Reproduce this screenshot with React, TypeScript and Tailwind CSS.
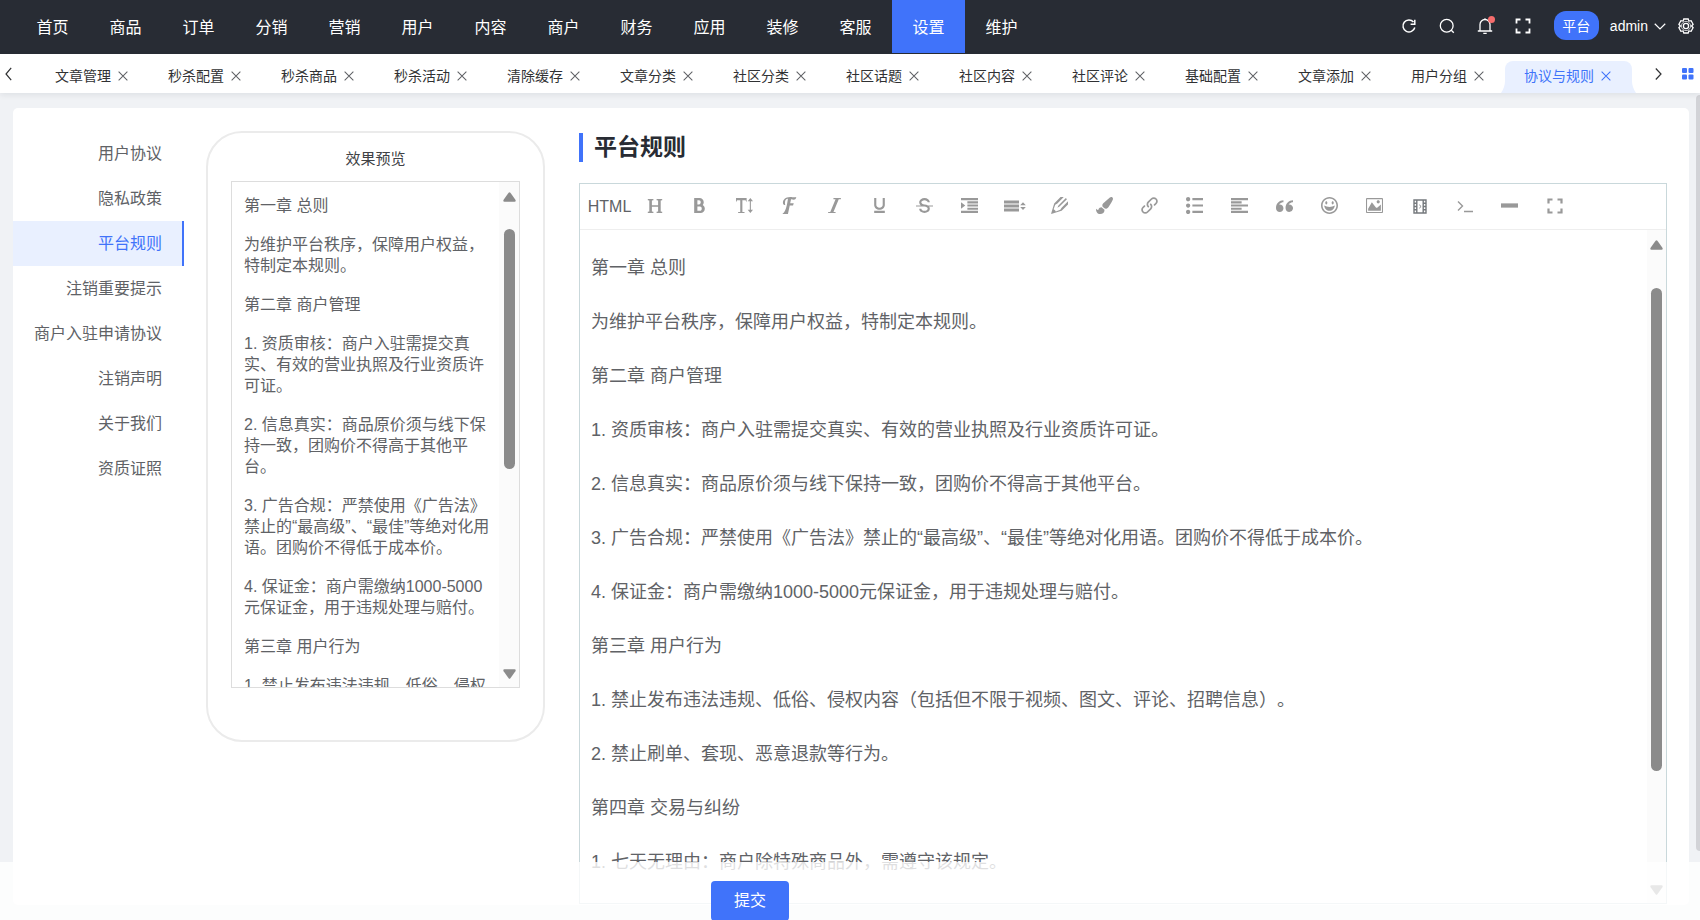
// React Core Imports
import React, { ReactNode } from 'react';
// Icon Imports
import {
  ImBold,
  ImFont,
  ImHappy,
  ImImage,
  ImIndentIncrease,
  ImItalic,
  ImLink,
  ImList2,
  ImParagraphLeft,
  ImPencil2,
  ImQuotesLeft,
  ImStrikethrough,
  ImTextHeight,
  ImUnderline,
} from 'react-icons/im';
import { FaPaintBrush } from 'react-icons/fa';

const navItems = [
  '首页',
  '商品',
  '订单',
  '分销',
  '营销',
  '用户',
  '内容',
  '商户',
  '财务',
  '应用',
  '装修',
  '客服',
  '设置',
  '维护',
];
const activeNav = '设置';

const tabs = [
  '文章管理',
  '秒杀配置',
  '秒杀商品',
  '秒杀活动',
  '清除缓存',
  '文章分类',
  '社区分类',
  '社区话题',
  '社区内容',
  '社区评论',
  '基础配置',
  '文章添加',
  '用户分组',
  '协议与规则',
];
const activeTab = '协议与规则';

const agreements = [
  '用户协议',
  '隐私政策',
  '平台规则',
  '注销重要提示',
  '商户入驻申请协议',
  '注销声明',
  '关于我们',
  '资质证照',
];
const activeAgreement = '平台规则';

const rules = [
  '第一章 总则',
  '为维护平台秩序，保障用户权益，特制定本规则。',
  '第二章 商户管理',
  '1. 资质审核：商户入驻需提交真实、有效的营业执照及行业资质许可证。',
  '2. 信息真实：商品原价须与线下保持一致，团购价不得高于其他平台。',
  '3. 广告合规：严禁使用《广告法》禁止的“最高级”、“最佳”等绝对化用语。团购价不得低于成本价。',
  '4. 保证金：商户需缴纳1000-5000元保证金，用于违规处理与赔付。',
  '第三章 用户行为',
  '1. 禁止发布违法违规、低俗、侵权内容（包括但不限于视频、图文、评论、招聘信息）。',
  '2. 禁止刷单、套现、恶意退款等行为。',
  '第四章 交易与纠纷',
  '1. 七天无理由：商户除特殊商品外，需遵守该规定。',
];

type IconProps = {
  size?: number;
  children: ReactNode;
  strokeWidth?: number;
};

// Stroked 16x16 icon frame
const LineIcon: React.FC<IconProps> = ({ size = 16, strokeWidth = 1.3, children }) => (
  <svg
    width={size}
    height={size}
    viewBox="0 0 16 16"
    fill="none"
    stroke="currentColor"
    strokeWidth={strokeWidth}
    aria-hidden="true"
  >
    {children}
  </svg>
);

const FullscreenIcon: React.FC<{ strokeWidth?: number }> = ({ strokeWidth = 2 }) => (
  <LineIcon strokeWidth={strokeWidth}>
    <path d="M1.5 5.5v-4h4M10.5 1.5h4v4M14.5 10.5v4h-4M5.5 14.5h-4v-4" />
  </LineIcon>
);

const CloseIcon = () => (
  <LineIcon size={14} strokeWidth={1.2}>
    <path d="M3 3l10 10M13 3L3 13" />
  </LineIcon>
);

const HeaderIcon = () => (
  <svg width="16" height="16" viewBox="0 0 16 16" fill="currentColor" aria-hidden="true">
    <path d="M.8 1h5.6v1.2l-1.5.3v4.7h6.2V2.5l-1.5-.3V1h5.6v1.2l-1.5.3v11l1.5.3V15H9.6v-1.2l1.5-.3V8.7H4.9v4.8l1.5.3V15H.8v-1.2l1.5-.3v-11L.8 2.2z" />
  </svg>
);

const LineHeightIcon = () => (
  <svg width="22" height="16" viewBox="0 0 22 16" fill="currentColor" aria-hidden="true">
    <path d="M0 2.500h15v3H0zM0 6.500h15v3H0zM0 10.500h15v3H0zM16.200 7.200L19 4.200l2.800 3zM16.200 9h5.600L19 12z" />
  </svg>
);

const FilmIcon = () => (
  <span className="text-[#75797d]">
    <LineIcon strokeWidth={1.4}>
      <path d="M2 2h12v13H2zM4.800 2v13M11.200 2v13M2 5.200h2.800M2 8.500h2.800M2 11.800h2.800M11.200 5.200H14M11.200 8.500H14M11.200 11.800H14" />
      <path d="M7.300 6.800l1.800 1.700-1.800 1.700" strokeWidth={0.9} />
    </LineIcon>
  </span>
);

const toolbar: { name: string; icon: ReactNode }[] = [
  { name: '标题', icon: <HeaderIcon /> },
  { name: '加粗', icon: <ImBold size={17} /> },
  { name: '字号', icon: <ImTextHeight size={17} /> },
  { name: '字体', icon: <ImFont size={17} /> },
  { name: '斜体', icon: <ImItalic size={17} /> },
  { name: '下划线', icon: <ImUnderline size={17} /> },
  { name: '删除线', icon: <ImStrikethrough size={17} /> },
  { name: '缩进', icon: <ImIndentIncrease size={17} /> },
  { name: '行高', icon: <LineHeightIcon /> },
  { name: '文字颜色', icon: <ImPencil2 size={17} /> },
  { name: '背景色', icon: <FaPaintBrush size={17} /> },
  { name: '链接', icon: <ImLink size={17} /> },
  { name: '序列', icon: <ImList2 size={17} /> },
  { name: '对齐', icon: <ImParagraphLeft size={17} /> },
  { name: '引用', icon: <ImQuotesLeft size={17} /> },
  { name: '表情', icon: <ImHappy size={17} /> },
  { name: '图片', icon: <ImImage size={17} /> },
  { name: '视频', icon: <FilmIcon /> },
  {
    name: '代码',
    icon: (
      <LineIcon strokeWidth={1.4}>
        <path d="M1 3.500l4.500 4.500L1 12.500M7 13.500h9" />
      </LineIcon>
    ),
  },
  {
    name: '分割线',
    icon: (
      <LineIcon size={17} strokeWidth={4}>
        <path d="M0 8h16" />
      </LineIcon>
    ),
  },
  { name: '全屏', icon: <FullscreenIcon strokeWidth={2.2} /> },
];

type ScrollRailProps = {
  className: string;
  before: string;
  thumb: string;
  after: string;
};

const ScrollRail: React.FC<ScrollRailProps> = ({ className, before, thumb, after }) => (
  <div
    aria-hidden="true"
    className={`flex shrink-0 flex-col items-center bg-[#fbfbfb] pt-2.5 pb-2 text-[#8b8b8b] ${className}`}
  >
    <svg width="13" height="10" viewBox="0 0 13 10" fill="currentColor">
      <path d="M5.600.7q.9-1 1.800 0l5 7q.9 1.800-.8 2H1.400q-1.700-.2-.8-2z" />
    </svg>
    <div className={before} />
    <div className={`w-[11px] rounded-full bg-[#8b8b8b] ${thumb}`} />
    <div className={after} />
    <svg width="13" height="10" viewBox="0 0 13 10" fill="currentColor">
      <path d="M5.600 9.300q.9 1 1.800 0l5-7Q13.300.5 11.600.3H1.400Q-.3.500.6 2.300z" />
    </svg>
  </div>
);

const TopBar = () => (
  <header className="flex h-[54px] shrink-0 justify-between bg-[#282c34] pr-1.5 pl-4 text-white">
    <nav className="flex">
      {navItems.map((item) => (
        <a
          key={item}
          href="#"
          className={`h-[53px] w-[73px] text-center text-base leading-[55px] ${
            item === activeNav ? 'bg-[#4073fa]' : ''
          }`}
        >
          {item}
        </a>
      ))}
    </nav>
    <div className="flex h-[51px] items-center">
      <div className="flex items-center gap-[22px]">
        <button aria-label="刷新">
          <LineIcon strokeWidth={1.5}>
            <path d="M13.800 9.500A6 6 0 1 1 12.500 4M13.800 1.800v4.400H9.600" />
          </LineIcon>
        </button>
        <button aria-label="搜索">
          <LineIcon>
            <circle cx="7.700" cy="7.700" r="6.400" />
            <path d="M12.300 12.300l2.500 2.500" />
          </LineIcon>
        </button>
        <button aria-label="消息" className="relative">
          <LineIcon>
            <path d="M.8 13h14.400M3 13V6.500a5 5 0 0 1 10 0V13M8 1.500V.2M6.300 15.300h3.400" />
          </LineIcon>
          <span className="absolute -top-0.5 -right-0.5 h-[7px] w-[7px] rounded-full bg-[#f56c6c]" />
        </button>
        <button aria-label="全屏">
          <FullscreenIcon strokeWidth={1.8} />
        </button>
      </div>
      <button className="ml-[23px] h-[29px] w-[45px] rounded-xl bg-[#4073fa] text-sm">平台</button>
      <button className="ml-[11px] flex items-center gap-1.5 text-sm">
        admin
        <LineIcon size={12} strokeWidth={1.6}>
          <path d="M1 5l7 7 7-7" />
        </LineIcon>
      </button>
      <button aria-label="设置" className="ml-3">
        <LineIcon>
          <path d="M5.800 1h4.400l.7 2.100 2.200-.4 2 3.600L13.600 8l1.500 1.700-2 3.600-2.200-.4-.7 2.100H5.800l-.7-2.100-2.200.4-2-3.600L2.400 8 .9 6.300l2-3.600 2.200.4z" />
          <circle cx="8" cy="8" r="2.600" />
          <circle cx="8" cy="8" r="4.600" strokeWidth="0.7" />
        </LineIcon>
      </button>
    </div>
  </header>
);

const TabBar = () => (
  <div className="relative z-10 flex h-[39px] shrink-0 items-end bg-white pr-1.5 pl-[5px] shadow-[0_2px_6px_rgba(0,21,41,0.08)]">
    <button aria-label="向左" className="flex h-[38px] items-center text-[#303133]">
      <svg width="7" height="14" viewBox="0 0 7 14" fill="none" stroke="currentColor">
        <path d="M6.200.8L1 7l5.200 6.200" strokeWidth="1.200" />
      </svg>
    </button>
    <ul className="ml-6 flex flex-1">
      {tabs.map((tab) => {
        const active = tab === activeTab;
        return (
          <li
            key={tab}
            className={`relative flex h-8 items-center gap-[5px] px-[19px] pb-0.5 text-sm ${
              active ? 'rounded-t-lg bg-[#e9f0ff] text-[#4073fa]' : 'text-[#303133]'
            }`}
          >
            {active && (
              <svg
                className="absolute bottom-0 -left-1 text-[#e9f0ff]"
                width="4"
                height="12"
                viewBox="0 0 4 12"
                fill="currentColor"
                aria-hidden="true"
              >
                <path d="M4 0v12H0Q4 6 4 0z" />
              </svg>
            )}
            <a href="#">{tab}</a>
            <button aria-label={`关闭${tab}`} className={active ? '' : 'text-[#606266]'}>
              <CloseIcon />
            </button>
            {active && (
              <svg
                className="absolute -right-1 bottom-0 text-[#e9f0ff]"
                width="4"
                height="12"
                viewBox="0 0 4 12"
                fill="currentColor"
                aria-hidden="true"
              >
                <path d="M0 0v12h4Q0 6 0 0z" />
              </svg>
            )}
          </li>
        );
      })}
    </ul>
    <div className="flex h-[38px] items-center gap-5">
      <button aria-label="向右" className="text-[#303133]">
        <svg width="7" height="12" viewBox="0 0 7 12" fill="none" stroke="currentColor">
          <path d="M.8.500L6 6 .8 11.500" strokeWidth="1.200" />
        </svg>
      </button>
      <button aria-label="标签页操作" className="text-[#4073fa]">
        <svg width="12" height="12" viewBox="0 0 12 12" fill="currentColor">
          <rect width="5" height="5" rx="1" />
          <rect x="6.500" width="5" height="5" rx="1" />
          <rect y="6.500" width="5" height="5" rx="1" />
          <rect x="6.500" y="6.500" width="5" height="5" rx="1" />
        </svg>
      </button>
    </div>
  </div>
);

const Preview = () => (
  <section className="mt-[23px] ml-[22px] h-[611px] w-[339px] shrink-0 rounded-[36px] border-2 border-[#ebebeb] px-[23px] pt-3.5">
    <h3 className="text-center text-[15px] leading-6 text-[#404245]">效果预览</h3>
    <div className="mt-2.5 flex h-[507px] overflow-hidden border border-[#ddd]">
      <div className="flex flex-1 flex-col gap-[18px] overflow-y-auto pt-[13px] pr-2 pl-3 text-base leading-[21px] [scrollbar-width:none]">
        {rules.map((rule) => (
          <p key={rule}>{rule}</p>
        ))}
      </div>
      <ScrollRail className="w-5" before="flex-27" thumb="flex-239" after="flex-200" />
    </div>
  </section>
);

const Editor = () => (
  <section className="mt-[25px] mr-[22px] mb-px ml-[34px] flex min-w-0 flex-1 flex-col">
    <h2 className="border-l-4 border-[#4073fa] pl-[11px] text-[23px] leading-[29px] font-bold text-[#282c34]">
      平台规则
    </h2>
    <div className="mt-[21px] flex min-h-0 flex-1 flex-col border border-[#c9d8db]">
      <div className="flex h-[46px] shrink-0 border-b border-[#eee] pl-[7px] text-[#999]">
        <button className="w-[45px] text-base text-[#606266]">HTML</button>
        {toolbar.map((tool) => (
          <button
            key={tool.name}
            aria-label={tool.name}
            className="flex w-[45px] items-center justify-center pb-0.5"
          >
            {tool.icon}
          </button>
        ))}
      </div>
      <div className="flex min-h-0 flex-1 overflow-hidden">
        <div className="flex flex-1 flex-col gap-[27px] overflow-y-auto pt-[25px] pr-2.5 pl-[11px] text-lg leading-[27px] [scrollbar-width:none]">
          {rules.map((rule) => (
            <p key={rule}>{rule}</p>
          ))}
        </div>
        <ScrollRail className="w-[19px]" before="flex-38" thumb="flex-484" after="flex-114" />
      </div>
    </div>
  </section>
);

const App: React.FC = () => (
  <div className="flex h-screen flex-col overflow-hidden bg-[#f0f2f5] font-['Liberation_Sans','Noto_Sans_CJK_SC',sans-serif] text-[#606266] [text-spacing-trim:space-all]">
    <TopBar />
    <TabBar />

    <main className="relative flex min-h-0 flex-1 pt-[15px] pr-[11px] pb-[15px] pl-[13px]">
      <div className="flex min-h-0 min-w-0 flex-1 rounded-[5px] bg-white">
        <aside className="w-[171px] shrink-0 pt-[23px]">
          <ul>
            {agreements.map((item) => (
              <li key={item}>
                <a
                  href="#"
                  className={`block border-r-2 pr-5 text-right text-base leading-[45px] ${
                    item === activeAgreement
                      ? 'border-[#4073fa] bg-[#e9f0ff] text-[#4073fa]'
                      : 'border-transparent'
                  }`}
                >
                  {item}
                </a>
              </li>
            ))}
          </ul>
        </aside>
        <Preview />
        <Editor />
      </div>
      <div className="absolute top-0.5 right-0 bottom-[69px] w-1 rounded-l bg-[#d2d3d7]" />
    </main>

    {/* Submit bar floats over the lower edge of the card */}
    <footer className="fixed inset-x-0 bottom-0 z-20 h-[58px] overflow-hidden bg-white/80 pt-[19px] pl-[711px]">
      <button className="h-10 w-[78px] rounded bg-[#4073fa] text-base text-white">提交</button>
    </footer>
  </div>
);

export default App;
